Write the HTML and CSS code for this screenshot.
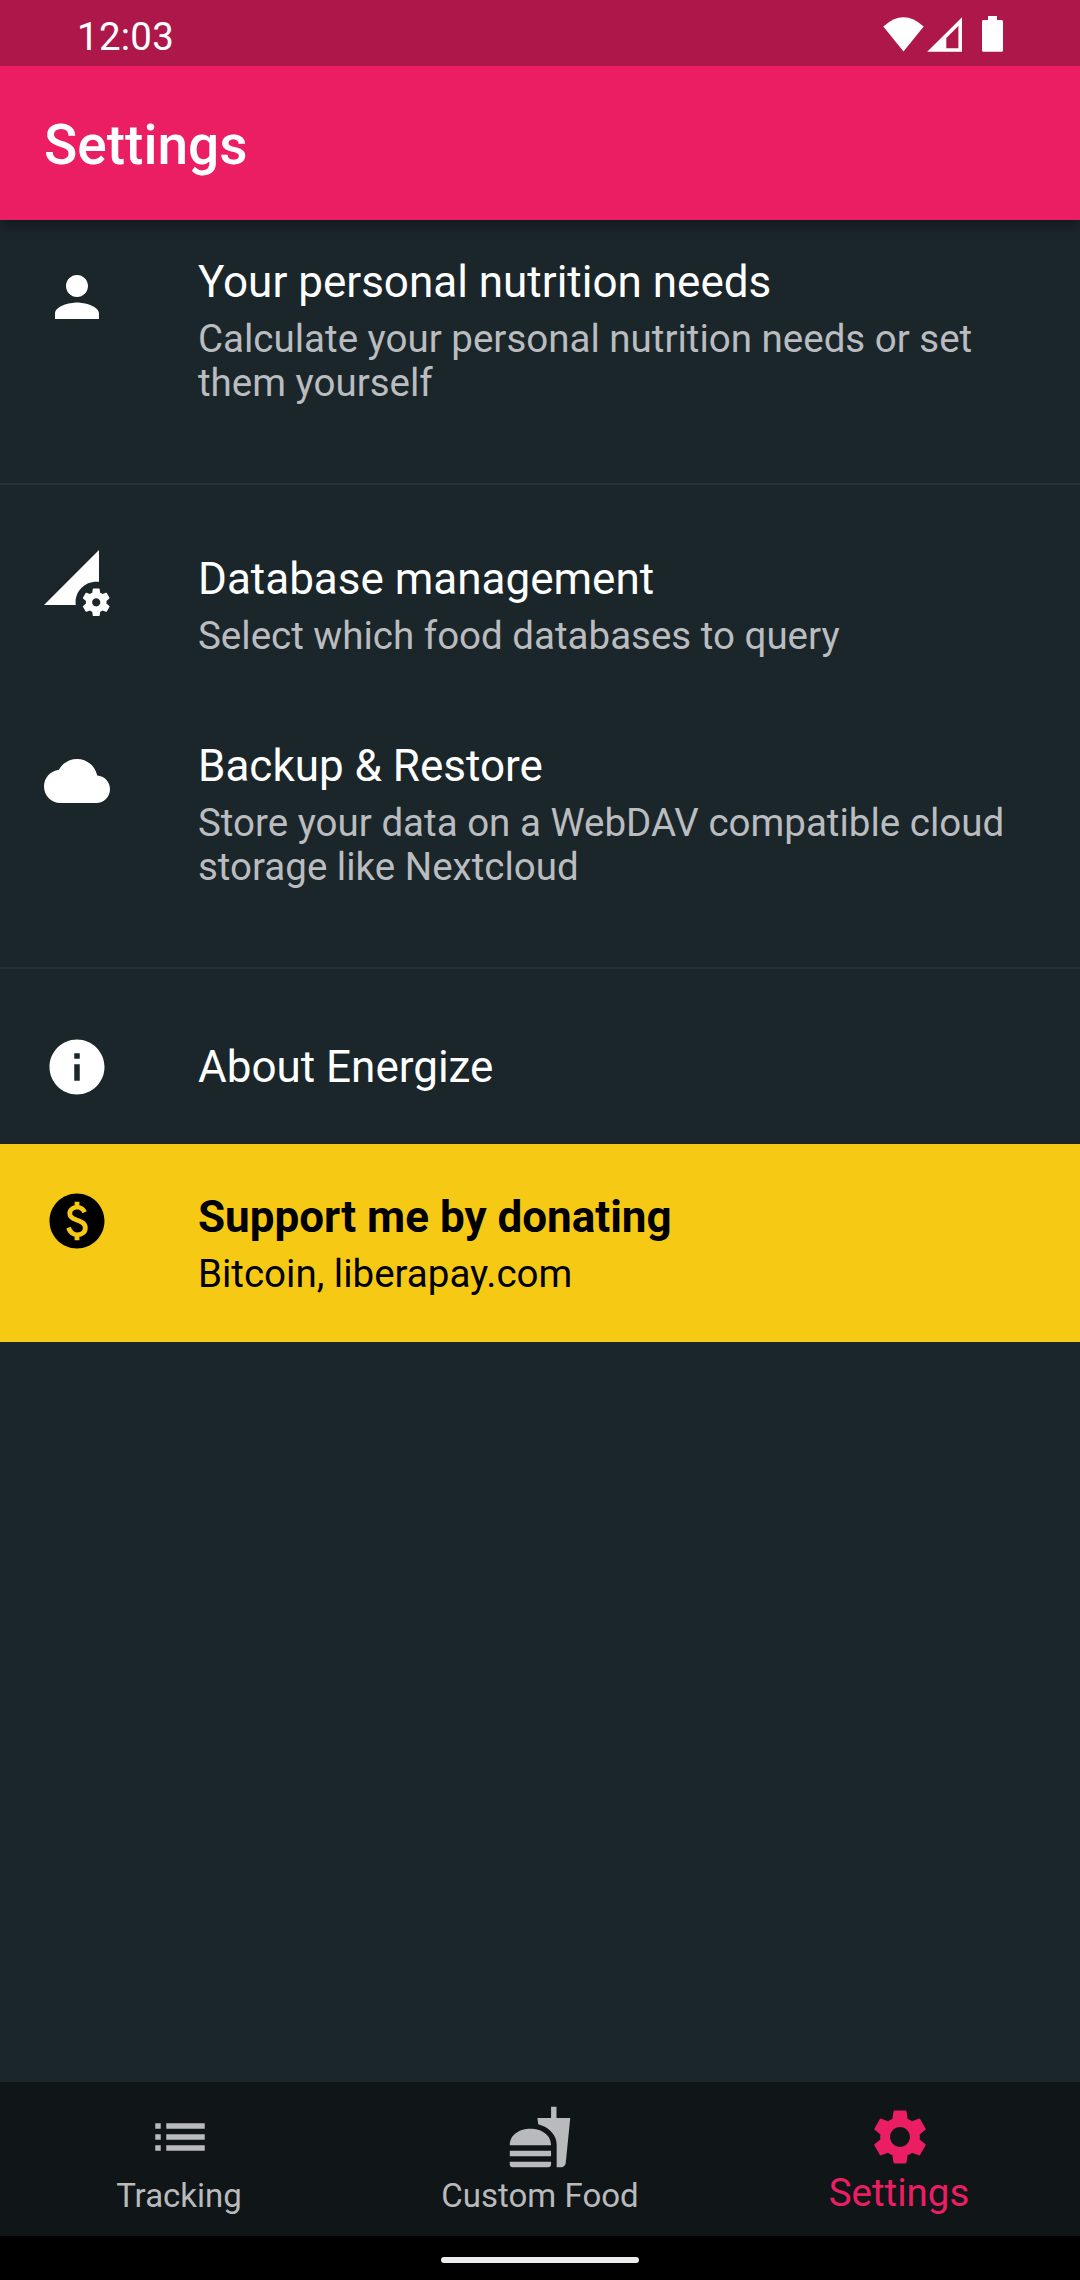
FILE: index.html
```html
<!DOCTYPE html>
<html lang="en">
<head>
<meta charset="utf-8">
<title>Settings</title>
<link rel="stylesheet" href="styles.css">
</head>
<body>
<div class="screen">
  <div class="status-bar">
    <span class="clock">12:03</span>
    <svg class="status-icons" viewBox="0 0 122 66" width="122" height="66" fill="currentColor" aria-hidden="true">
      <path d="M3.300 26.500Q23.500 8 43.700 26.500L23.500 51.500z"/>
      <path fill-rule="evenodd" d="M47.200 51.800L82 17.300v34.500zM66.300 48.200h12.100V26L66.300 38z"/>
      <path d="M108 16h9v4h4.500q1.500 0 1.500 1.500v28.700q0 1.500-1.500 1.500h-18q-1.500 0-1.500-1.500V21.500q0-1.500 1.500-1.500h4.500z"/>
    </svg>
  </div>
  <header class="app-bar"><h1 class="app-title">Settings</h1></header>

  <main class="content">
    <div class="item three-line">
      <svg class="icon" viewBox="0 0 24 24"><path d="M12 12c2.210 0 4-1.790 4-4s-1.790-4-4-4-4 1.790-4 4 1.790 4 4 4zm0 2c-2.670 0-8 1.340-8 4v2h16v-2c0-2.660-5.330-4-8-4z"/></svg>
      <div class="item-text">
        <div class="item-title">Your personal nutrition needs</div>
        <div class="item-subtitle">Calculate your personal nutrition needs or set them yourself</div>
      </div>
    </div>
    <hr class="divider">
    <div class="item two-line">
      <svg class="icon" viewBox="0 0 24 24"><path d="M18.990 11.500c.34 0 .67.03 1 .07L20 0 0 20h11.560c-.04-.33-.07-.66-.07-1 0-4.140 3.360-7.500 7.500-7.500zm3.710 7.990c.02-.16.04-.32.04-.49 0-.17-.01-.33-.04-.49l1.060-.83c.09-.08.12-.21.06-.32l-1-1.730c-.06-.11-.19-.15-.31-.11l-1.240.5c-.26-.2-.54-.37-.85-.49l-.19-1.320c-.01-.12-.12-.21-.24-.21h-2c-.12 0-.23.09-.25.21l-.19 1.320c-.3.13-.59.29-.85.49l-1.240-.5c-.11-.04-.24 0-.31.11l-1 1.730c-.06.11-.04.24.06.32l1.060.83c-.02.16-.03.32-.03.49 0 .17.01.33.03.49l-1.060.83c-.09.08-.12.21-.06.32l1 1.730c.06.11.19.15.31.11l1.240-.5c.26.2.54.37.85.49l.19 1.320c.02.12.12.21.25.21h2c.12 0 .23-.09.25-.21l.19-1.320c.3-.13.59-.29.84-.49l1.250.5c.11.04.24 0 .31-.11l1-1.730c.06-.11.03-.24-.06-.32l-1.070-.83zm-3.710 1.010c-.83 0-1.500-.67-1.500-1.500s.67-1.500 1.500-1.500 1.500.67 1.500 1.500-.67 1.500-1.500 1.500z"/></svg>
      <div class="item-text">
        <div class="item-title">Database management</div>
        <div class="item-subtitle">Select which food databases to query</div>
      </div>
    </div>
    <div class="item three-line">
      <svg class="icon" viewBox="0 0 24 24"><path d="M19.350 10.040C18.670 6.590 15.640 4 12 4 9.110 4 6.600 5.640 5.350 8.040 2.340 8.360 0 10.910 0 14c0 3.310 2.690 6 6 6h13c2.760 0 5-2.240 5-5 0-2.640-2.050-4.780-4.650-4.960z"/></svg>
      <div class="item-text">
        <div class="item-title">Backup &amp; Restore</div>
        <div class="item-subtitle">Store your data on a WebDAV compatible cloud storage like Nextcloud</div>
      </div>
    </div>
    <hr class="divider">
    <div class="item one-line">
      <svg class="icon" viewBox="0 0 24 24"><path d="M12 2C6.480 2 2 6.480 2 12s4.480 10 10 10 10-4.480 10-10S17.520 2 12 2zm1 15h-2v-6h2v6zm0-8h-2V7h2v2z"/></svg>
      <div class="item-text">
        <div class="item-title">About Energize</div>
      </div>
    </div>
    <div class="item two-line donate">
      <svg class="icon" viewBox="0 0 24 24"><path fill-rule="evenodd" d="M12,2C6.480,2,2,6.480,2,12s4.480,10,10,10s10-4.480,10-10S17.520,2,12,2z M12.880,17.760V19h-1.750v-1.290c-0.740-0.180-2.390-0.770-3.020-2.960l1.650-0.670c0.060,0.220,0.580,2.090,2.400,2.090c0.930,0,1.980-0.480,1.980-1.610c0-0.960-0.700-1.460-2.280-2.030c-1.100-0.390-3.350-1.030-3.350-3.310c0-0.100,0.010-2.400,2.620-2.960V5h1.750v1.240c1.840,0.320,2.510,1.790,2.660,2.230l-1.580,0.670c-0.110-0.350-0.590-1.340-1.900-1.340c-0.700,0-1.810,0.370-1.810,1.390c0,0.950,0.860,1.310,2.640,1.900c2.400,0.830,3.010,2.050,3.010,3.450C15.900,17.170,13.400,17.670,12.880,17.760z"/></svg>
      <div class="item-text">
        <div class="item-title">Support me by donating</div>
        <div class="item-subtitle">Bitcoin, liberapay.com</div>
      </div>
    </div>
  </main>

  <nav class="bottom-nav">
    <div class="nav-item">
      <svg class="icon" viewBox="0 0 24 24"><path d="M3 13h2v-2H3v2zm0 4h2v-2H3v2zm0-8h2V7H3v2zm4 4h14v-2H7v2zm0 4h14v-2H7v2zM7 7v2h14V7H7z"/></svg>
      <span class="nav-label">Tracking</span>
    </div>
    <div class="nav-item">
      <svg class="icon" viewBox="0 0 24 24"><path d="M18.060 22.990h1.660c.84 0 1.530-.64 1.630-1.460L23 5.050h-5V1h-1.970v4.050h-4.970l.3 2.340c1.710.47 3.310 1.320 4.270 2.260 1.440 1.420 2.430 2.890 2.430 5.290v8.050zM1 21.990V21h15.030v.99c0 .55-.45 1-1.010 1H2.010c-.56 0-1.010-.45-1.010-1zm15.030-7c0-8-15.030-8-15.030 0h15.030zM1.020 17h15v2h-15z"/></svg>
      <span class="nav-label">Custom Food</span>
    </div>
    <div class="nav-item active">
      <svg class="icon" viewBox="0 0 24 24"><path d="M19.140,12.940c0.040-0.300,0.060-0.610,0.060-0.940c0-0.320-0.020-0.640-0.070-0.940l2.030-1.580c0.180-0.140,0.230-0.410,0.120-0.610l-1.920-3.320c-0.120-0.220-0.370-0.290-0.590-0.220l-2.390,0.960c-0.500-0.380-1.030-0.700-1.620-0.940L14.400,2.810c-0.040-0.240-0.240-0.410-0.480-0.410h-3.840c-0.240,0-0.430,0.170-0.470,0.410L9.250,5.350C8.660,5.590,8.120,5.920,7.630,6.290L5.240,5.330c-0.220-0.080-0.470,0-0.590,0.220L2.740,8.870C2.620,9.080,2.660,9.340,2.860,9.480l2.030,1.580C4.840,11.360,4.800,11.690,4.800,12s0.020,0.640,0.070,0.940l-2.030,1.580c-0.180,0.140-0.230,0.410-0.120,0.610l1.920,3.320c0.120,0.220,0.370,0.290,0.590,0.220l2.390-0.960c0.500,0.380,1.030,0.700,1.620,0.940l0.360,2.540c0.050,0.240,0.240,0.410,0.480,0.410h3.840c0.240,0,0.440-0.170,0.470-0.410l0.360-2.540c0.590-0.240,1.130-0.560,1.620-0.940l2.390,0.960c0.220,0.080,0.470,0,0.590-0.220l1.920-3.320c0.120-0.220,0.070-0.470-0.120-0.610L19.140,12.940z M12,15.600c-1.980,0-3.600-1.620-3.600-3.600s1.620-3.600,3.600-3.600s3.600,1.620,3.600,3.600S13.980,15.600,12,15.600z"/></svg>
      <span class="nav-label">Settings</span>
    </div>
  </nav>
  <div class="gesture-bar"><div class="pill"></div></div>
</div>
</body>
</html>
```

FILE: styles.css
```css
* {
  box-sizing: border-box;
}

body {
  margin: 0;
  background: #1b262b;
  color: #fff;
  font-family: Roboto, "Noto Sans", sans-serif;
}

.screen {
  display: flex;
  flex-direction: column;
  width: 1080px;
  height: 2280px;
  overflow: hidden;
}

/* stacked above the app bar so its shadow only falls downwards */
.status-bar {
  position: relative;
  z-index: 1;
  display: flex;
  justify-content: space-between;
  height: 66px;
  padding: 0 78px 0 77px;
  background: #ae1749;
}

.clock {
  font-size: 38.5px;
  letter-spacing: 0.25px;
  line-height: 74px;
}

.status-icons {
  overflow: visible;
}

.app-bar {
  height: 154px;
  padding: 47px 44px 0;
  background: #eb1e63;
  box-shadow: 0 5px 12px rgba(0, 0, 0, 0.35);
}

.app-title {
  margin: 0;
  font-size: 55px;
  font-weight: 500;
  line-height: 64px;
}

.content {
  flex: 1;
}

.item {
  display: flex;
  align-items: flex-start;
  gap: 88px;
  padding: 0 44px;
}

.icon {
  flex: none;
  width: 66px;
  height: 66px;
  fill: currentColor;
}

.item > .icon {
  margin-top: 44px;
}

.item-text {
  flex: 1;
}

.item-title {
  font-size: 44px;
  line-height: 52px;
}

.item-subtitle {
  margin-top: 9px;
  color: #babcbf;
  font-size: 38.5px;
  line-height: 44px;
}

.one-line {
  height: 154px;
}

.one-line .item-text {
  padding-top: 51px;
}

.two-line {
  height: 198px;
}

.two-line .item-text {
  padding-top: 47px;
}

.three-line {
  height: 242px;
}

.three-line .item-text {
  padding-top: 36px;
}

.divider {
  height: 2px;
  margin: 21px 0;
  border: 0;
  background: #273237;
}

.donate {
  background: #f6c915;
  color: #000;
}

.donate .item-title {
  font-weight: 700;
}

.donate .item-subtitle {
  color: #000;
}

.bottom-nav {
  display: flex;
  justify-content: space-between;
  height: 154px;
  background: #101518;
  color: #b8babc;
}

.nav-item {
  display: flex;
  flex: 1;
  flex-direction: column;
  align-items: center;
  padding-top: 22px;
}

.nav-label {
  font-size: 33px;
  line-height: 51px;
}

.nav-item:first-child .nav-label,
.active .nav-label {
  padding-right: 2px;
}

.active {
  color: #eb1e63;
}

.active .nav-label {
  font-size: 38.5px;
  line-height: 46px;
}

.gesture-bar {
  display: flex;
  justify-content: center;
  height: 44px;
  padding-top: 21px;
  background: #000;
}

.pill {
  width: 198px;
  height: 6px;
  border-radius: 3px;
  background: #ececee;
}
```
